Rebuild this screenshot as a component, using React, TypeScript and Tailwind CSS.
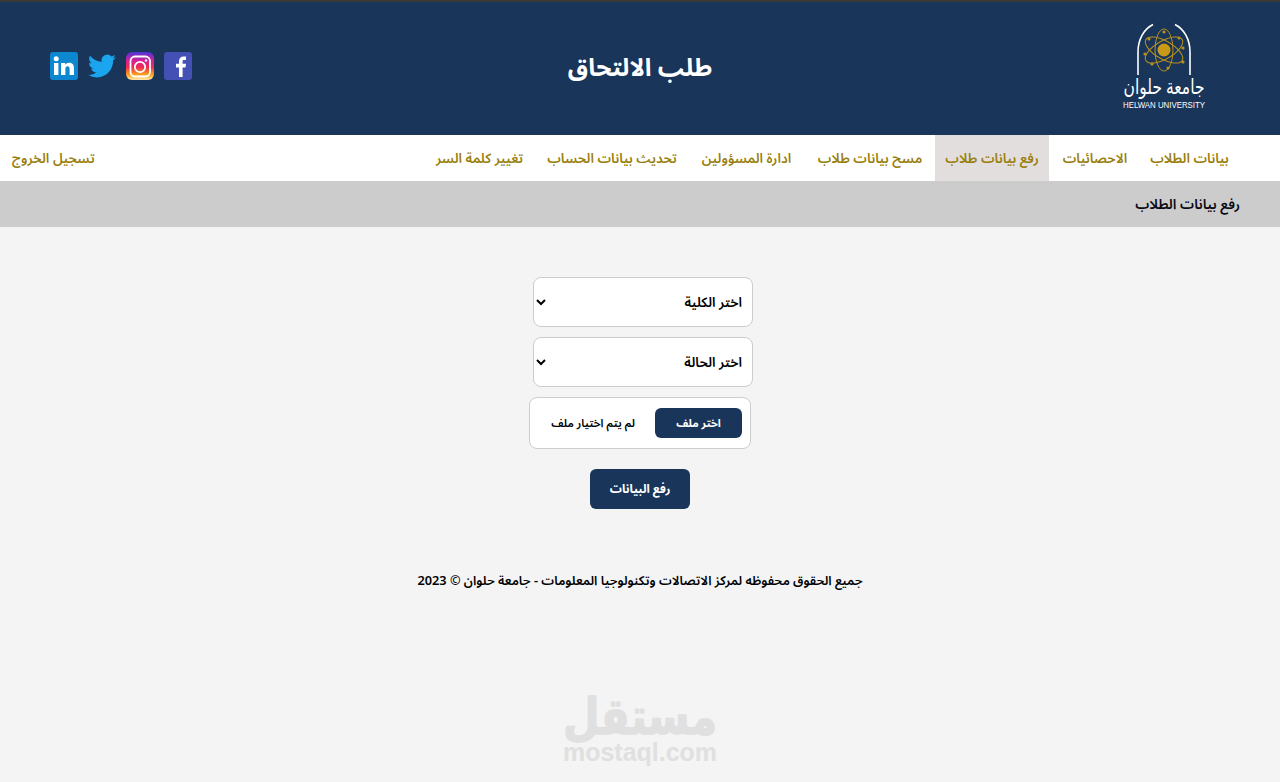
const font = "font-['Noto_Sans','Noto_Sans_Arabic','DejaVu_Sans',sans-serif]";

const navItems = [
  { label: "بيانات الطلاب", width: "w-[97px]" },
  { label: "الاحصائيات", width: "w-[84px]" },
  { label: "رفع بيانات طلاب", width: "w-[114px]", active: true },
  { label: "مسح بيانات طلاب", width: "w-[122px]" },
  { label: "ادارة المسؤولين", width: "w-[117px]" },
  { label: "تحديث بيانات الحساب", width: "w-[144px]" },
  { label: "تغيير كلمة السر", width: "w-[113px]" },
];

function Logo() {
  const gold = "#b8901c";
  return (
    <svg width="84" height="85" viewBox="0 0 84 85" fill="none" className="overflow-visible">
      <path d="M16 51V28C16 15 22 5 31 0.500" stroke="#fff" strokeWidth="1.600" />
      <path d="M68 51V28C68 15 62 5 53 0.500" stroke="#fff" strokeWidth="1.600" />
      <g stroke={gold} strokeWidth="1">
        <ellipse cx="42" cy="26" rx="21" ry="9" transform="rotate(30 42 26)" />
        <ellipse cx="42" cy="26" rx="21" ry="9" transform="rotate(-30 42 26)" />
        <ellipse cx="42" cy="26" rx="21" ry="9" transform="rotate(90 42 26)" />
      </g>
      <circle cx="42" cy="26" r="6.500" fill="#c89a18" />
      <g fill={gold}>
        <circle cx="27" cy="15" r="1.600" />
        <circle cx="57" cy="14" r="1.600" />
        <circle cx="61" cy="24" r="1.600" />
        <circle cx="61" cy="38" r="1.600" />
        <circle cx="23" cy="30" r="1.600" />
        <circle cx="42" cy="8" r="1.600" />
        <circle cx="46" cy="44" r="1.600" />
        <circle cx="30" cy="40" r="1.600" />
      </g>
      <text x="42" y="70" textAnchor="middle" fill="#fff" fontSize="21" fontWeight="500" textLength="81" lengthAdjust="spacingAndGlyphs" fontFamily="'Noto Sans','DejaVu Sans',sans-serif" direction="rtl">
        جامعة حلوان
      </text>
      <text x="42" y="83.500" textAnchor="middle" fill="#fff" fontSize="8.500" textLength="82" lengthAdjust="spacingAndGlyphs" fontFamily="'Liberation Sans',sans-serif" direction="ltr">
        HELWAN UNIVERSITY
      </text>
    </svg>
  );
}

function Socials() {
  return (
    <div dir="ltr" className="flex items-center gap-[10px]">
      <svg width="28" height="28" viewBox="0 0 28 28">
        <rect width="28" height="28" rx="3" fill="#0d88d0" />
        <rect x="4" y="11" width="4.400" height="12" fill="#fff" />
        <circle cx="6.200" cy="6.800" r="2.500" fill="#fff" />
        <path d="M11 11h4.200v1.800c.8-1.300 2.200-2.100 4-2.100 3.600 0 4.800 2.300 4.800 5.600V23h-4.400v-6c0-1.700-.5-2.800-2-2.800-1.600 0-2.200 1.200-2.200 2.800v6H11z" fill="#fff" />
      </svg>
      <svg width="28" height="28" viewBox="0 0 24 24">
        <path fill="#1aa5ee" d="M23.950 4.570a10 10 0 0 1-2.820.770 4.960 4.960 0 0 0 2.160-2.720c-.950.550-2 .950-3.130 1.180a4.920 4.920 0 0 0-8.380 4.480C7.690 8.090 4.070 6.130 1.640 3.160a4.820 4.820 0 0 0-.660 2.470c0 1.710.870 3.210 2.190 4.100a4.900 4.900 0 0 1-2.230-.620v.060a4.920 4.920 0 0 0 3.950 4.830c-.720.190-1.490.220-2.220.080a4.940 4.940 0 0 0 4.600 3.420A9.870 9.870 0 0 1 0 19.540a14 14 0 0 0 7.560 2.210c9.050 0 14-7.500 14-13.980 0-.210 0-.420-.020-.630a9.940 9.940 0 0 0 2.460-2.550z" />
      </svg>
      <svg width="28" height="28" viewBox="0 0 28 28">
        <defs>
          <linearGradient id="ig" x1="0" y1="1" x2="0" y2="0">
            <stop offset="0" stopColor="#ffe9a8" />
            <stop offset="0.2" stopColor="#f9a01e" />
            <stop offset="0.45" stopColor="#ee2d52" />
            <stop offset="0.7" stopColor="#d3209a" />
            <stop offset="1" stopColor="#4a35d8" />
          </linearGradient>
        </defs>
        <rect width="28" height="28" rx="6" fill="url(#ig)" />
        <rect x="4.500" y="4.500" width="19.500" height="20" rx="4.500" fill="none" stroke="#fff" strokeWidth="1.800" />
        <circle cx="14" cy="15" r="5.200" fill="none" stroke="#fff" strokeWidth="1.800" />
        <circle cx="20" cy="8.500" r="1.200" fill="#fff" />
      </svg>
      <svg width="28" height="28" viewBox="0 0 28 28">
        <rect width="28" height="28" rx="3" fill="#4450b3" />
        <path d="M15 25V15.500h-3v-3.700h3V9.200c0-3.100 1.900-4.700 4.600-4.700 1.300 0 2.200.1 2.400.1v3.300h-1.700c-1.500 0-1.700.7-1.700 1.700v2.200h3.400l-.5 3.700h-2.900V25z" fill="#fff" />
      </svg>
    </div>
  );
}

function Watermark() {
  return (
    <svg width="156" height="76" viewBox="0 0 156 76" fill="#e0e0e0" className="overflow-visible">
      <text x="78" y="42" textAnchor="middle" fontSize="50" fontWeight="800" stroke="#e0e0e0" strokeWidth="1.500" strokeLinejoin="round" textLength="154" lengthAdjust="spacingAndGlyphs" fontFamily="'Noto Sans','DejaVu Sans',sans-serif" direction="rtl">
        مستقل
      </text>
      <text x="78" y="69" textAnchor="middle" fontSize="25" fontWeight="700" textLength="154" lengthAdjust="spacingAndGlyphs" fontFamily="'Liberation Sans',sans-serif" direction="ltr">
        mostaql.com
      </text>
    </svg>
  );
}

export default function App() {
  return (
    <div dir="rtl" className={`relative h-[782px] overflow-hidden bg-[#f4f4f4] ${font}`}>
      <header className="grid h-[135px] grid-cols-3 items-center border-t-2 border-[#3a3a3a] bg-[#19355a] px-[50px]">
        <div className="flex justify-start pr-[24px] pb-[5px]">
          <Logo />
        </div>
        <h1 className="pb-[2px] text-center text-[24.500px] font-bold text-white">طلب الالتحاق</h1>
        <div className="flex justify-end pb-[6px]">
          <Socials />
        </div>
      </header>

      <nav className="flex h-[46px] items-stretch justify-between bg-white pr-[42px] pl-[12px] text-[13.500px] font-semibold text-[#9a7f0e]">
        <ul className="flex items-stretch gap-[4px]">
          {navItems.map((item) => (
            <li
              key={item.label}
              className={`flex items-center justify-center ${item.width} ${item.active ? "bg-[#e2dede]" : ""}`}
            >
              {item.label}
            </li>
          ))}
        </ul>
        <a className="flex items-center">تسجيل الخروج</a>
      </nav>

      <div className="flex h-[46px] items-center bg-[#cccccc] pr-[40px] text-sm font-semibold text-[#0a0a14]">
        رفع بيانات الطلاب
      </div>

      <main className="flex flex-col items-center pt-[50px]">
        <select className="mr-[-6px] h-[50px] w-[220px] rounded-lg border border-[#cccccc] bg-white pr-[6px] pl-[2px] text-[13.500px] font-semibold text-black">
          <option>اختر الكلية</option>
        </select>
        <select className="mt-[10px] mr-[-6px] h-[50px] w-[220px] rounded-lg border border-[#cccccc] bg-white pr-[6px] pl-[2px] text-[13.500px] font-semibold text-black">
          <option>اختر الحالة</option>
        </select>
        <div className="mt-[10px] flex h-[52px] w-[222px] items-center gap-[20px] rounded-lg border border-[#cccccc] bg-white pr-[8px]">
          <button className="h-[30px] w-[87px] rounded-md bg-[#19355a] text-[11px] font-bold text-white">
            اختر ملف
          </button>
          <span className="text-[11.300px] font-semibold text-black">لم يتم اختيار ملف</span>
        </div>
        <button className="mt-[20px] h-[40px] w-[100px] rounded-md bg-[#19355a] text-xs font-bold text-white">
          رفع البيانات
        </button>
        <p className="mt-[62px] text-[12.750px] font-semibold text-black">
          جميع الحقوق محفوظه لمركز الاتصالات وتكنولوجيا المعلومات - جامعة حلوان © 2023
        </p>
      </main>

      <div className="absolute bottom-[14px] left-1/2 -translate-x-1/2">
        <Watermark />
      </div>
    </div>
  );
}
